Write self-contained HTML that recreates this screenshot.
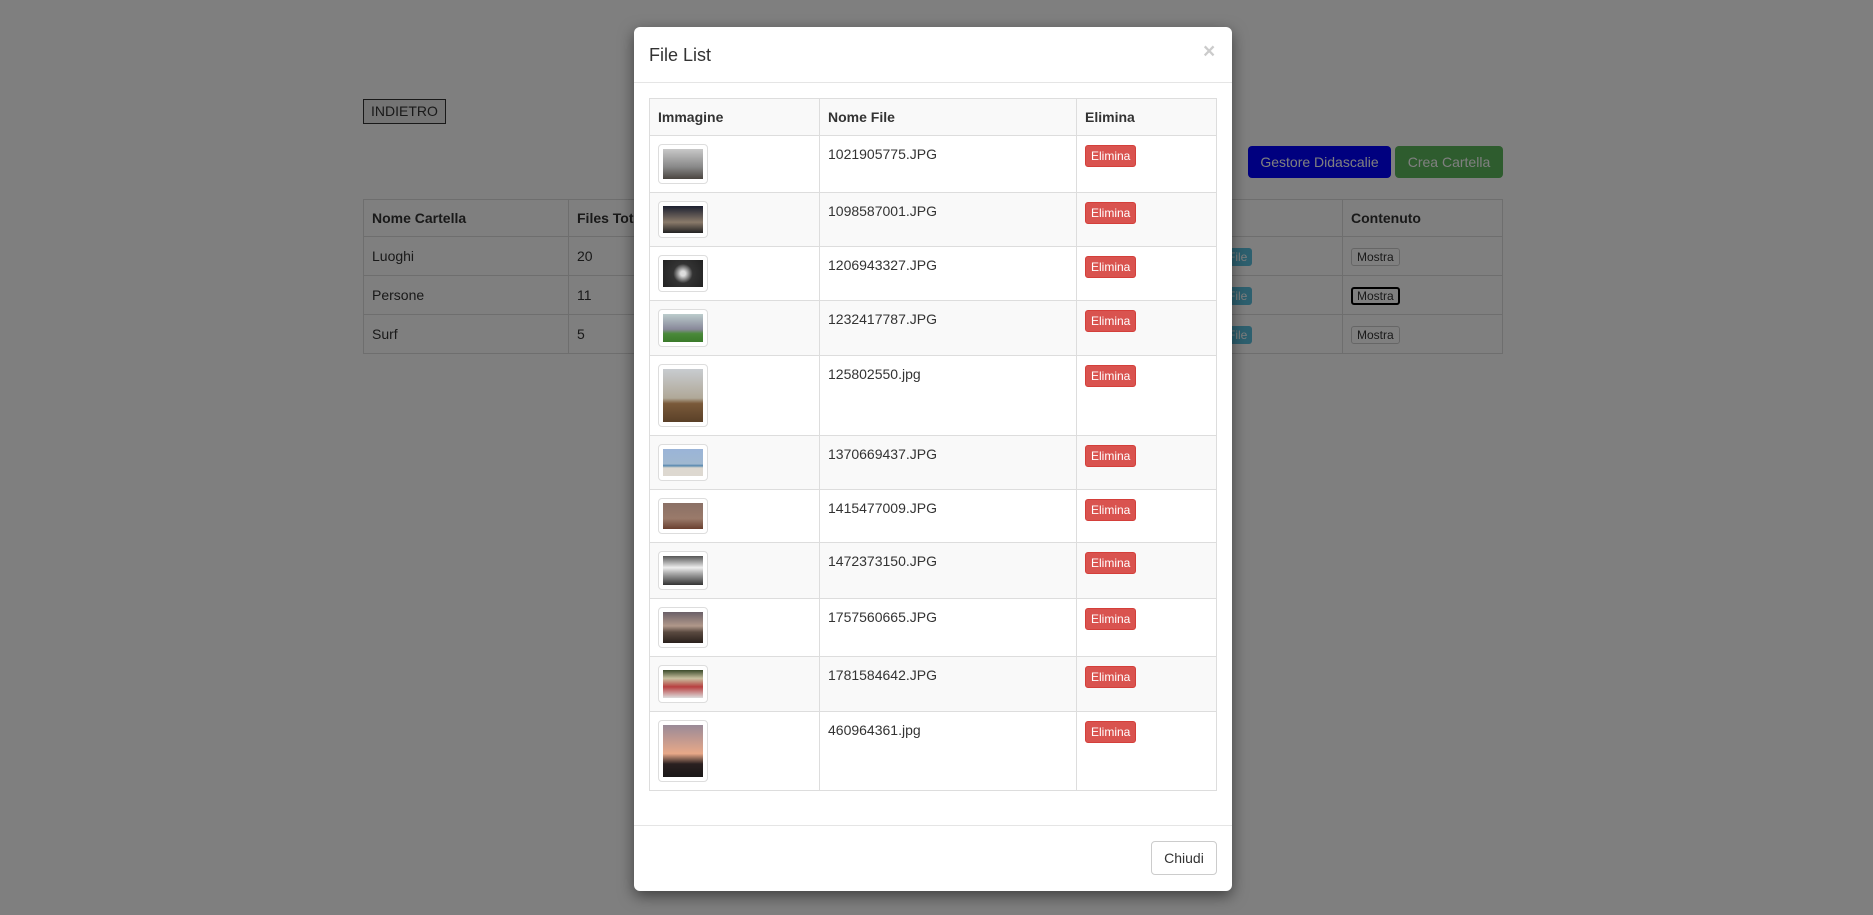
<!DOCTYPE html>
<html><head><meta charset="utf-8">
<style>
*{box-sizing:border-box}
html,body{margin:0;padding:0}
body{width:1873px;height:915px;position:relative;overflow:hidden;background:#fff;font-family:"Liberation Sans",Arial,sans-serif;font-size:14px;color:#333}
.bgbtn{position:absolute;font-size:14px;line-height:20px;text-align:center}
table.bg{position:absolute;left:363px;top:199px;width:1140px;border-collapse:collapse}
table.bg td,table.bg th{border:1px solid #ddd;padding:8px;text-align:left;line-height:20px;height:39px}
table.bg th{height:37px}
.ov{position:absolute;left:0;top:0;width:1873px;height:915px;background:rgba(0,0,0,.5)}
.modal{position:absolute;left:634px;top:27px;width:598px;height:864px;background:#fff;border-radius:6px;box-shadow:0 5px 15px rgba(0,0,0,.5)}
.mh{height:56px;border-bottom:1px solid #e5e5e5;padding:15px}
.mh h4{margin:0;font-size:18px;font-weight:normal;line-height:26px;color:#333}
.close{position:absolute;left:569px;top:14px;font-size:21px;font-weight:bold;color:#000;opacity:.2;line-height:21px}
table.fl{position:absolute;left:15px;top:71px;width:568px;border-collapse:collapse}
table.fl td,table.fl th{border:1px solid #ddd;padding:8px;text-align:left;vertical-align:top;line-height:20px}
table.fl th{background:#f9f9f9;font-weight:bold;height:37px}
table.fl tr.g td{background:#f9f9f9}
.th{display:block;width:50px;padding:4px;border:1px solid #ddd;border-radius:4px;background:#fff;line-height:0}
.th span{display:block;width:40px}
.el{display:inline-block;background:#d9534f;border:1px solid #d43f3a;color:#fff;font-size:12px;line-height:18px;padding:1px 5px;border-radius:3px;margin-top:1px}
.mf{position:absolute;left:0;top:798px;width:598px;border-top:1px solid #e5e5e5;height:66px}
.chiudi{position:absolute;left:517px;top:15px;width:66px;height:34px;border:1px solid #ccc;border-radius:4px;font-size:14px;line-height:32px;text-align:center;color:#333;background:#fff}
.fb{background:#5bc0de;color:#fff;padding:2px 5px;border-radius:3px;font-size:12px;margin-left:146px}
</style></head><body>
<div class="bgbtn" style="left:363px;top:99px;width:83px;height:25px;border:1px solid #333;background:#e8e8e8;line-height:23px">INDIETRO</div>
<div class="bgbtn" style="left:1248px;top:146px;width:143px;height:32px;background:#0000ff;color:#fff;border-radius:4px;line-height:32px">Gestore Didascalie</div>
<div class="bgbtn" style="left:1395px;top:146px;width:108px;height:32px;background:#5cb85c;color:#fff;border-radius:4px;line-height:32px">Crea Cartella</div>
<table class="bg">
<tr><th style="width:205px">Nome Cartella</th><th style="width:300px">Files Totali</th><th style="width:200px"></th><th style="width:274px">Upload</th><th>Contenuto</th></tr>
<tr><td>Luoghi</td><td>20</td><td></td><td><span class="fb">File</span></td><td><span style="border:1px solid #ccc;padding:1px 5px;border-radius:3px;font-size:12px">Mostra</span></td></tr>
<tr><td>Persone</td><td>11</td><td></td><td><span class="fb">File</span></td><td><span style="border:2px solid #000;padding:0 4px;border-radius:3px;font-size:12px">Mostra</span></td></tr>
<tr><td>Surf</td><td>5</td><td></td><td><span class="fb">File</span></td><td><span style="border:1px solid #ccc;padding:1px 5px;border-radius:3px;font-size:12px">Mostra</span></td></tr>
</table>
<div class="ov"></div>
<div class="modal">
<div class="mh"><h4>File List</h4></div>
<div class="close">×</div>
<table class="fl">
<tr><th style="width:170px">Immagine</th><th style="width:257px">Nome File</th><th>Elimina</th></tr>
<tr><td><div class="th"><span style="height:30px;background:linear-gradient(#c8c8c8,#888 60%,#4a4540)"></span></div></td><td>1021905775.JPG</td><td><span class="el">Elimina</span></td></tr>
<tr class="g"><td><div class="th"><span style="height:27px;background:linear-gradient(#1c2030,#8a7a6a 60%,#222)"></span></div></td><td>1098587001.JPG</td><td><span class="el">Elimina</span></td></tr>
<tr><td><div class="th"><span style="height:27px;background:radial-gradient(circle,#ddd 10%,#333 40%,#222)"></span></div></td><td>1206943327.JPG</td><td><span class="el">Elimina</span></td></tr>
<tr class="g"><td><div class="th"><span style="height:28px;background:linear-gradient(#bcc,#889 55%,#4a8a3a 70%,#3a7a2a)"></span></div></td><td>1232417787.JPG</td><td><span class="el">Elimina</span></td></tr>
<tr><td><div class="th"><span style="height:53px;background:linear-gradient(#c8ccd0,#b0a898 55%,#7a5a3a 65%,#5a4028)"></span></div></td><td>125802550.jpg</td><td><span class="el">Elimina</span></td></tr>
<tr class="g"><td><div class="th"><span style="height:27px;background:linear-gradient(#9ab4d8,#a0b8d0 55%,#5a8ab0 62%,#ddd8d0 70%)"></span></div></td><td>1370669437.JPG</td><td><span class="el">Elimina</span></td></tr>
<tr><td><div class="th"><span style="height:26px;background:linear-gradient(#8a7066,#9a7a6a 60%,#6a4030)"></span></div></td><td>1415477009.JPG</td><td><span class="el">Elimina</span></td></tr>
<tr class="g"><td><div class="th"><span style="height:29px;background:linear-gradient(#555,#eee 40%,#aaa 60%,#333)"></span></div></td><td>1472373150.JPG</td><td><span class="el">Elimina</span></td></tr>
<tr><td><div class="th"><span style="height:31px;background:linear-gradient(#6a6068,#b0988a 45%,#5a4a40 65%,#2a201c)"></span></div></td><td>1757560665.JPG</td><td><span class="el">Elimina</span></td></tr>
<tr class="g"><td><div class="th"><span style="height:28px;background:linear-gradient(#3a4a2a,#c8c0a0 30%,#b84040 60%,#ddd)"></span></div></td><td>1781584642.JPG</td><td><span class="el">Elimina</span></td></tr>
<tr><td><div class="th"><span style="height:52px;background:linear-gradient(#9a8a98,#e8a888 55%,#2a2020 75%,#1a1818)"></span></div></td><td>460964361.jpg</td><td><span class="el">Elimina</span></td></tr>
</table>
<div class="mf"><div class="chiudi">Chiudi</div></div>
</div>
</body></html>
